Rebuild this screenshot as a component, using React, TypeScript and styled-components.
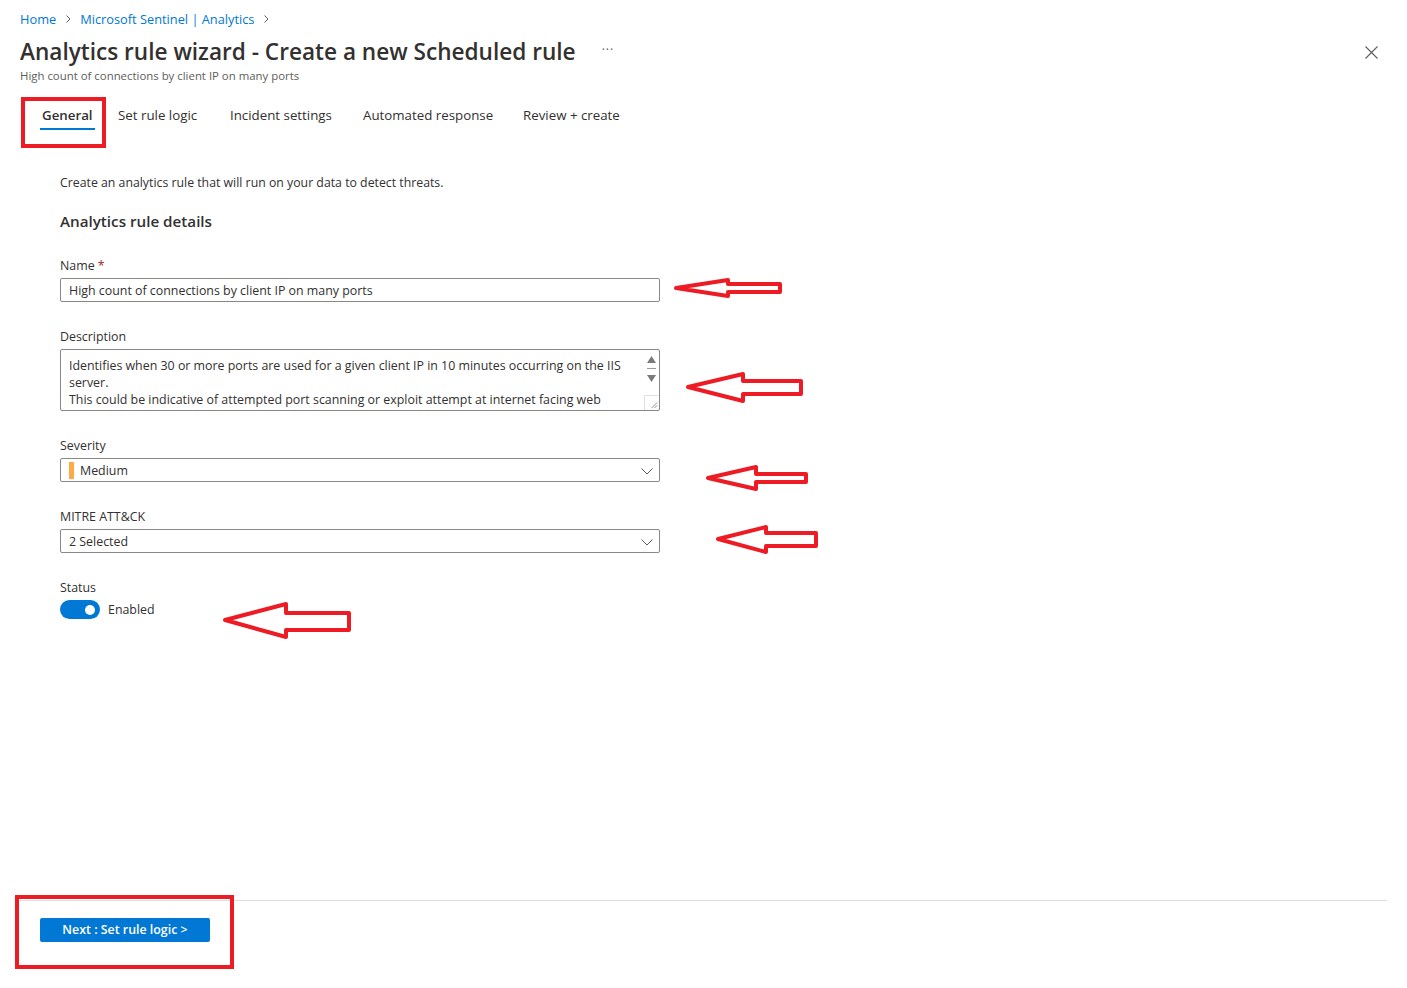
import React from "react";
import styled, { createGlobalStyle } from "styled-components";

const FONT = `"Open Sans", "Noto Sans", "Liberation Sans", sans-serif`;

const GlobalStyle = createGlobalStyle`
  html, body { margin: 0; padding: 0; background: #ffffff; }
  body { font-family: ${FONT}; color: #323130; }
  * { box-sizing: border-box; }
`;

const Page = styled.div`
  position: relative;
  width: 1407px;
  height: 988px;
  display: flex;
  flex-direction: column;
  background: #fff;
  overflow: hidden;
`;

const Header = styled.header`
  padding: 10px 24px 0 20px;
`;

const Breadcrumb = styled.nav`
  display: flex;
  align-items: center;
  gap: 8px;
  height: 18px;
  font-size: 12.8px;
  line-height: 18px;
`;

const Crumb = styled.a`
  color: #0078d4;
  text-decoration: none;
`;

const Chevron = styled.svg`
  width: 8px;
  height: 8px;
  color: #605e5c;
`;

const TitleRow = styled.div`
  margin-top: 8px;
  display: flex;
  align-items: center;
  height: 32px;
`;

const Title = styled.h1`
  margin: 0;
  font-size: 22.6px;
  line-height: 32px;
  font-weight: 600;
  color: #323130;
`;

const More = styled.span`
  margin-left: 26px;
  color: #605e5c;
  font-size: 12px;
  letter-spacing: 1px;
  line-height: 32px;
  position: relative;
  top: -2px;
`;

const CloseButton = styled.button`
  margin-left: auto;
  width: 24px;
  height: 24px;
  border: none;
  background: transparent;
  display: flex;
  align-items: center;
  justify-content: center;
  padding: 0;
`;

const Subtitle = styled.div`
  font-size: 11.4px;
  line-height: 16px;
  color: #605e5c;
`;

const Tabs = styled.div`
  display: flex;
  margin-top: 14px;
  height: 34px;
  padding-left: 40px;
`;

const Tab = styled.div<{ $w: number }>`
  width: ${(p) => p.$w}px;
  flex: none;
  display: flex;
  flex-direction: column;
  align-items: flex-start;
`;

const TabLabel = styled.span<{ $active?: boolean }>`
  padding: 7px 2px 3px;
  font-size: 13.3px;
  line-height: 20px;
  font-weight: ${(p) => (p.$active ? 600 : 400)};
  color: #323130;
  border-bottom: 2px solid ${(p) => (p.$active ? "#0078d4" : "transparent")};
  white-space: nowrap;
`;

const Main = styled.main`
  flex: 1;
  padding: 42px 60px 0;
`;

const Intro = styled.p`
  margin: 0;
  font-size: 12.3px;
  line-height: 18px;
`;

const SectionTitle = styled.h2`
  margin: 18px 0 24px;
  font-size: 15.2px;
  line-height: 22px;
  font-weight: 600;
`;

const Field = styled.div`
  margin-bottom: 25px;
`;

const Label = styled.div`
  font-size: 12.4px;
  line-height: 18px;
  padding-top: 1px;
  margin-bottom: 3px;
  color: #323130;
`;

const Required = styled.span`
  color: #a4262c;
  margin-left: 3px;
`;

const Input = styled.div`
  width: 600px;
  height: 24px;
  border: 1px solid #8a8886;
  border-radius: 2px;
  padding: 1px 8px 0;
  font-size: 12.4px;
  line-height: 22px;
  display: flex;
  align-items: center;
  gap: 6px;
`;

const TextArea = styled.div`
  width: 600px;
  height: 62px;
  border: 1px solid #8a8886;
  border-radius: 2px;
  display: flex;
  overflow: hidden;
`;

const TextAreaBody = styled.div`
  flex: 1;
  padding: 7px 8px 0;
  font-size: 12.4px;
  line-height: 17px;
`;

const ScrollTrack = styled.div`
  width: 15px;
  display: flex;
  flex-direction: column;
  align-items: center;
  padding-top: 6px;
`;

const ScrollArrow = styled.svg`
  width: 9px;
  height: 7px;
  color: #7a7a7a;
`;

const ScrollDivider = styled.div`
  width: 9px;
  height: 1px;
  background: #9a9a9a;
  margin: 5px 0 6px;
`;

const Grip = styled.svg`
  margin-top: auto;
  width: 15px;
  height: 15px;
  border-top: 1px solid #e1e1e1;
  border-left: 1px solid #e1e1e1;
`;

const SeverityBar = styled.span`
  width: 5px;
  height: 17px;
  background: #ffaa44;
  flex: none;
`;

const SelectValue = styled.span`
  flex: 1;
`;

const DropIcon = styled.svg`
  width: 12px;
  height: 8px;
  color: #605e5c;
  margin-right: -2px;
`;

const ToggleRow = styled.div`
  display: flex;
  align-items: center;
  gap: 8px;
  font-size: 12.4px;
  line-height: 18px;
`;

const Toggle = styled.div`
  width: 40px;
  height: 19px;
  border-radius: 10px;
  background: #0078d4;
  display: flex;
  align-items: center;
  justify-content: flex-end;
  padding-right: 5px;
`;

const Knob = styled.span`
  width: 10px;
  height: 10px;
  border-radius: 50%;
  background: #fff;
`;

const Footer = styled.footer`
  margin: 0 20px;
  height: 88px;
  border-top: 1px solid #e1dfdd;
  padding: 16px 20px 0;
`;

const PrimaryButton = styled.button`
  width: 170px;
  height: 24px;
  border: none;
  border-radius: 2px;
  background: #0078d4;
  color: #fff;
  font-family: ${FONT};
  font-size: 12.4px;
  font-weight: 600;
  line-height: 24px;
  padding: 0;
  cursor: pointer;
`;

const Highlight = styled.div<{ $x: number; $y: number; $w: number; $h: number }>`
  position: absolute;
  left: ${(p) => p.$x}px;
  top: ${(p) => p.$y}px;
  width: ${(p) => p.$w}px;
  height: ${(p) => p.$h}px;
  border: 4px solid #ed1c24;
  pointer-events: none;
`;

const ArrowSvg = styled.svg`
  position: absolute;
  pointer-events: none;
  overflow: visible;
`;

type ArrowProps = {
  tipX: number;
  tipY: number;
  headX: number;
  headTop: number;
  headBottom: number;
  shaftTop: number;
  shaftBottom: number;
  right: number;
};

const Arrow = ({ tipX, tipY, headX, headTop, headBottom, shaftTop, shaftBottom, right }: ArrowProps) => {
  const w = right - tipX;
  const h = headBottom - headTop;
  const ox = tipX;
  const oy = headTop;
  const pts = [
    [tipX + 3, tipY],
    [headX, headTop + 2],
    [headX, shaftTop + 2],
    [right - 2, shaftTop + 2],
    [right - 2, shaftBottom - 2],
    [headX, shaftBottom - 2],
    [headX, headBottom - 2],
  ]
    .map(([x, y]) => `${x - ox},${y - oy}`)
    .join(" ");
  return (
    <ArrowSvg style={{ left: ox, top: oy }} width={w} height={h} viewBox={`0 0 ${w} ${h}`}>
      <polygon points={pts} fill="none" stroke="#ed1c24" strokeWidth={4} strokeLinejoin="round" />
    </ArrowSvg>
  );
};

const ChevronRight = () => (
  <Chevron viewBox="0 0 8 8">
    <path d="M2.5 0.5 L6 4 L2.5 7.5" fill="none" stroke="currentColor" strokeWidth="1" />
  </Chevron>
);

const ChevronDown = () => (
  <DropIcon viewBox="0 0 12 8">
    <path d="M0.5 1.5 L6 7 L11.5 1.5" fill="none" stroke="currentColor" strokeWidth="1" />
  </DropIcon>
);

const tabs = [
  { label: "General", w: 76, active: true },
  { label: "Set rule logic", w: 112 },
  { label: "Incident settings", w: 133 },
  { label: "Automated response", w: 160 },
  { label: "Review + create", w: 140 },
];

export default function App() {
  return (
    <Page>
      <GlobalStyle />
      <Header>
        <Breadcrumb>
          <Crumb href="#">Home</Crumb>
          <ChevronRight />
          <Crumb href="#">Microsoft Sentinel | Analytics</Crumb>
          <ChevronRight />
        </Breadcrumb>
        <TitleRow>
          <Title>Analytics rule wizard - Create a new Scheduled rule</Title>
          <More>···</More>
          <CloseButton aria-label="Close">
            <svg width="13" height="13" viewBox="0 0 13 13">
              <path d="M0.5 0.5 L12.5 12.5 M12.5 0.5 L0.5 12.5" stroke="#605e5c" strokeWidth="1.1" />
            </svg>
          </CloseButton>
        </TitleRow>
        <Subtitle>High count of connections by client IP on many ports</Subtitle>
      </Header>

      <Tabs>
        {tabs.map((t) => (
          <Tab key={t.label} $w={t.w}>
            <TabLabel $active={t.active}>{t.label}</TabLabel>
          </Tab>
        ))}
      </Tabs>

      <Main>
        <Intro>Create an analytics rule that will run on your data to detect threats.</Intro>
        <SectionTitle>Analytics rule details</SectionTitle>

        <Field>
          <Label>
            Name<Required>*</Required>
          </Label>
          <Input>High count of connections by client IP on many ports</Input>
        </Field>

        <Field>
          <Label>Description</Label>
          <TextArea>
            <TextAreaBody>
              Identifies when 30 or more ports are used for a given client IP in 10 minutes occurring on the IIS
              <br />
              server.
              <br />
              This could be indicative of attempted port scanning or exploit attempt at internet facing web
            </TextAreaBody>
            <ScrollTrack>
              <ScrollArrow viewBox="0 0 9 7">
                <path d="M4.5 0 L9 7 L0 7 Z" fill="currentColor" />
              </ScrollArrow>
              <ScrollDivider />
              <ScrollArrow viewBox="0 0 9 7">
                <path d="M0 0 L9 0 L4.5 7 Z" fill="currentColor" />
              </ScrollArrow>
              <Grip viewBox="0 0 15 15">
                <path d="M13 7 L7 13 M13 10 L10 13" stroke="#8a8a8a" strokeWidth="1" />
              </Grip>
            </ScrollTrack>
          </TextArea>
        </Field>

        <Field>
          <Label>Severity</Label>
          <Input>
            <SeverityBar />
            <SelectValue>Medium</SelectValue>
            <ChevronDown />
          </Input>
        </Field>

        <Field>
          <Label>MITRE ATT&amp;CK</Label>
          <Input>
            <SelectValue>2 Selected</SelectValue>
            <ChevronDown />
          </Input>
        </Field>

        <Field>
          <Label>Status</Label>
          <ToggleRow>
            <Toggle>
              <Knob />
            </Toggle>
            Enabled
          </ToggleRow>
        </Field>
      </Main>

      <Footer>
        <PrimaryButton>Next : Set rule logic &gt;</PrimaryButton>
      </Footer>

      <Highlight $x={21} $y={97} $w={85} $h={51} />
      <Highlight $x={15} $y={895} $w={219} $h={74} />

      <Arrow tipX={673} tipY={288} headX={728} headTop={278} headBottom={298} shaftTop={282} shaftBottom={294} right={782} />
      <Arrow tipX={685} tipY={387} headX={743} headTop={372} headBottom={403} shaftTop={379} shaftBottom={396} right={803} />
      <Arrow tipX={705} tipY={478} headX={756} headTop={465} headBottom={491} shaftTop={472} shaftBottom={484} right={808} />
      <Arrow tipX={715} tipY={539} headX={766} headTop={525} headBottom={554} shaftTop={531} shaftBottom={548} right={818} />
      <Arrow tipX={222} tipY={620} headX={286} headTop={602} headBottom={639} shaftTop={611} shaftBottom={632} right={351} />
    </Page>
  );
}
